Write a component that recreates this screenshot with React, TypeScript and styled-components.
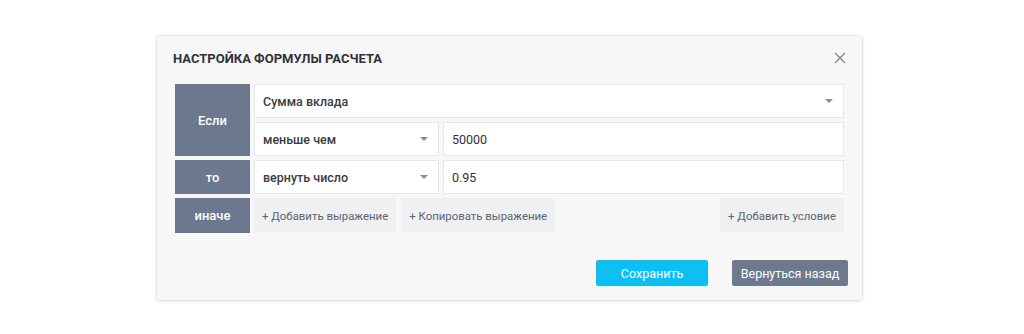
import React from 'react';
import styled, { createGlobalStyle } from 'styled-components';

const GlobalStyle = createGlobalStyle`
  html, body {
    margin: 0;
    padding: 0;
    background: #fff;
    font-family: Roboto, 'Noto Sans', sans-serif;
  }
  * { box-sizing: border-box; }
`;

const Page = styled.div`
  width: 1024px;
  height: 334px;
  padding: 36px 0 0 157px;
`;

const Dialog = styled.div`
  width: 705px;
  background: #f7f7f7;
  border-radius: 2px;
  box-shadow: 0 0 3px rgba(0, 0, 0, 0.18), 0 1px 4px rgba(0, 0, 0, 0.08);
  padding: 0 14px 14px 18px;
`;

const Header = styled.div`
  display: flex;
  align-items: flex-start;
  justify-content: space-between;
  padding-top: 14px;
  margin-left: -2px;
  margin-bottom: 17px;
  height: 31px;
`;

const Title = styled.h2`
  margin: 0;
  font-size: 13px;
  line-height: 17px;
  font-weight: 700;
  color: #2f3237;
`;

const CloseButton = styled.button`
  border: 0;
  background: none;
  padding: 0;
  margin: 2px 1px 0 0;
  width: 13px;
  height: 13px;
  display: flex;
  cursor: pointer;
`;

const Grid = styled.div`
  display: grid;
  grid-template-columns: 75px 185px 1fr;
  grid-template-rows: 34px 34px 34px 35px;
  gap: 4px;
  margin-right: 4px;
`;

const Label = styled.div<{ $rows?: number }>`
  grid-row: span ${({ $rows }) => $rows ?? 1};
  background: #6b788d;
  color: #fff;
  font-size: 13px;
  font-weight: 500;
  display: flex;
  align-items: center;
  justify-content: center;
`;

const Field = styled.div<{ $wide?: boolean }>`
  grid-column: ${({ $wide }) => ($wide ? 'span 2' : 'auto')};
  background: #fff;
  border: 1px solid #e6e7e9;
  display: flex;
  align-items: center;
  padding: 0 10px 0 8px;
  font-size: 12.5px;
  color: #333;
`;

const SelectText = styled.span`
  flex: 1;
  font-weight: 500;
  color: #3a3c40;
`;

const Caret = styled.span`
  width: 0;
  height: 0;
  border-left: 4px solid transparent;
  border-right: 4px solid transparent;
  border-top: 4px solid #8a8d92;
`;

const Actions = styled.div`
  grid-column: span 2;
  display: flex;
  gap: 5px;
`;

const AddButton = styled.button<{ $push?: boolean }>`
  margin-left: ${({ $push }) => ($push ? 'auto' : '0')};
  border: 0;
  background: #eef0f2;
  color: #5d6470;
  font-family: inherit;
  font-size: 11.4px;
  padding: 0 8px;
  cursor: pointer;
`;

const Footer = styled.div`
  display: flex;
  justify-content: flex-end;
  gap: 24px;
  margin-top: 27px;
`;

const FooterButton = styled.button<{ $variant: 'primary' | 'secondary' }>`
  height: 26px;
  width: ${({ $variant }) => ($variant === 'primary' ? '112px' : '116px')};
  border: 0;
  border-radius: 2px;
  background: ${({ $variant }) => ($variant === 'primary' ? '#0dbff2' : '#6d798d')};
  color: #fff;
  font-family: inherit;
  font-size: 12.5px;
  cursor: pointer;
`;

const Select = ({ value, wide }: { value: string; wide?: boolean }) => (
  <Field $wide={wide}>
    <SelectText>{value}</SelectText>
    <Caret />
  </Field>
);

export default function App() {
  return (
    <>
      <GlobalStyle />
      <Page>
        <Dialog>
          <Header>
            <Title>НАСТРОЙКА ФОРМУЛЫ РАСЧЕТА</Title>
            <CloseButton aria-label="Закрыть">
              <svg width="12" height="12" viewBox="0 0 12 12">
                <path d="M1 1L11 11M11 1L1 11" stroke="#7d8288" strokeWidth="1.2" />
              </svg>
            </CloseButton>
          </Header>
          <Grid>
            <Label $rows={2}>Если</Label>
            <Select value="Сумма вклада" wide />
            <Select value="меньше чем" />
            <Field>50000</Field>
            <Label>то</Label>
            <Select value="вернуть число" />
            <Field>0.95</Field>
            <Label>иначе</Label>
            <Actions>
              <AddButton>+ Добавить выражение</AddButton>
              <AddButton>+ Копировать выражение</AddButton>
              <AddButton $push>+ Добавить условие</AddButton>
            </Actions>
          </Grid>
          <Footer>
            <FooterButton $variant="primary">Сохранить</FooterButton>
            <FooterButton $variant="secondary">Вернуться назад</FooterButton>
          </Footer>
        </Dialog>
      </Page>
    </>
  );
}
